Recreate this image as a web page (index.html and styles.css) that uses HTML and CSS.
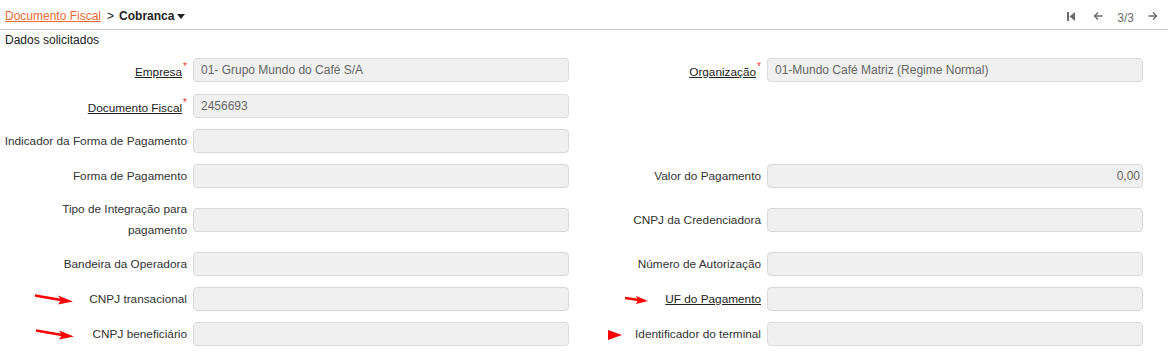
FILE: index.html
```html
<!DOCTYPE html>
<html>
    <head>
        <title>Cobranca</title>
        <link rel="stylesheet" href="styles.css">
    </head>
    <body>
        <div class="topbar">
            <div class="crumbs">
                <a class="crumb-link" href="#">Documento Fiscal</a>
                <span class="sep">&gt;</span>
                <span class="current">Cobranca</span>
                <svg class="caret" width="8" height="5" viewBox="0 0 8 5"><polygon points="0,0 8,0 4,5" fill="#222"/></svg>
            </div>
            <div class="pager">
                <svg class="pg-icon first" width="8" height="9" viewBox="0 0 8 9"><rect x="0" y="0" width="2" height="9" fill="#6b6b6b"/><polygon points="8,0 8,9 2.5,4.5" fill="#6b6b6b"/></svg>
                <svg class="pg-icon" width="10" height="10" viewBox="0 0 10 10"><path d="M9.5 5H1.5M5 1.5L1.5 5L5 8.5" stroke="#6b6b6b" stroke-width="1.4" fill="none"/></svg>
                <span class="pg-count">3/3</span>
                <svg class="pg-icon" width="10" height="10" viewBox="0 0 10 10"><path d="M0.5 5H8.5M5 1.5L8.5 5L5 8.5" stroke="#6b6b6b" stroke-width="1.4" fill="none"/></svg>
            </div>
        </div>

        <div class="section-title">Dados solicitados</div>

        <div class="form">
            <div class="row">
                <div class="field">
                    <label class="lbl"><u>Empresa</u><span class="req">*</span></label>
                    <div class="inp">01- Grupo Mundo do Café S/A</div>
                </div>
                <div class="field">
                    <label class="lbl"><u>Organização</u><span class="req">*</span></label>
                    <div class="inp">01-Mundo Café Matriz (Regime Normal)</div>
                </div>
            </div>

            <div class="row">
                <div class="field">
                    <label class="lbl"><u>Documento Fiscal</u><span class="req">*</span></label>
                    <div class="inp">2456693</div>
                </div>
                <div class="field"></div>
            </div>

            <div class="row">
                <div class="field">
                    <label class="lbl">Indicador da Forma de Pagamento</label>
                    <div class="inp"></div>
                </div>
                <div class="field"></div>
            </div>

            <div class="row">
                <div class="field">
                    <label class="lbl">Forma de Pagamento</label>
                    <div class="inp"></div>
                </div>
                <div class="field">
                    <label class="lbl">Valor do Pagamento</label>
                    <div class="inp num">0,00</div>
                </div>
            </div>

            <div class="row">
                <div class="field">
                    <label class="lbl wrap">Tipo de Integração para pagamento</label>
                    <div class="inp"></div>
                </div>
                <div class="field">
                    <label class="lbl">CNPJ da Credenciadora</label>
                    <div class="inp"></div>
                </div>
            </div>

            <div class="row">
                <div class="field">
                    <label class="lbl">Bandeira da Operadora</label>
                    <div class="inp"></div>
                </div>
                <div class="field">
                    <label class="lbl">Número de Autorização</label>
                    <div class="inp"></div>
                </div>
            </div>

            <div class="row">
                <div class="field">
                    <svg class="mark mark-a" width="40" height="12" viewBox="0 0 40 12"><path d="M0 1.5L26 6" stroke="#f00" stroke-width="2.4"/><polygon points="23,1.5 38,7.5 23,10.5 26,6" fill="#f00"/></svg>
                    <label class="lbl">CNPJ transacional</label>
                    <div class="inp"></div>
                </div>
                <div class="field">
                    <svg class="mark mark-b" width="24" height="8" viewBox="0 0 24 8"><path d="M0 2L14 4" stroke="#f00" stroke-width="2.6"/><polygon points="11,0 23,5 11,8 13,4" fill="#f00"/></svg>
                    <label class="lbl"><u>UF do Pagamento</u></label>
                    <div class="inp"></div>
                </div>
            </div>

            <div class="row">
                <div class="field">
                    <svg class="mark mark-c" width="40" height="12" viewBox="0 0 40 12"><path d="M0 1.5L26 6" stroke="#f00" stroke-width="2.4"/><polygon points="23,1.5 38,7.5 23,10.5 26,6" fill="#f00"/></svg>
                    <label class="lbl">CNPJ beneficiário</label>
                    <div class="inp"></div>
                </div>
                <div class="field">
                    <svg class="mark mark-d" width="14" height="10" viewBox="0 0 14 10"><polygon points="0,0 14,5 0,10" fill="#f00"/></svg>
                    <label class="lbl">Identificador do terminal</label>
                    <div class="inp"></div>
                </div>
            </div>
        </div>
    </body>
</html>
```
FILE: styles.css
```css
body {
    margin: 0;
    background-color: white;
    color: #333;
    font-family: "Liberation Sans", Arial, sans-serif;
    font-size: 12px;
}

.topbar {
    display: flex;
    align-items: center;
    justify-content: space-between;
    height: 29px;
    width: 1168px;
    border-bottom: 1px solid #c8c8c8;
}

.crumbs {
    display: flex;
    align-items: center;
    padding-left: 5px;
    padding-top: 3px;
    font-size: 12px;
}

.crumb-link {
    color: #ee6b35;
    text-decoration: underline;
}

.sep {
    color: #222;
    margin: 0 5px 0 6px;
}

.current {
    color: #222;
    font-weight: bold;
}

.caret {
    margin-left: 3px;
}

.pager {
    display: flex;
    align-items: center;
    padding-right: 10px;
    padding-top: 3px;
    color: #6b6b6b;
}

.pg-icon.first {
    margin-right: 18px;
}

.pg-count {
    margin: 0 14px 0 14px;
    padding-top: 4px;
}

.section-title {
    padding: 3px 0 0 5px;
    height: 18px;
    color: #222;
}

.form {
    padding-top: 6px;
}

.row {
    display: flex;
    align-items: center;
    margin-bottom: 11px;
}

.field {
    position: relative;
    display: flex;
    align-items: center;
    width: 574px;
}

.lbl {
    width: 187px;
    margin-right: 6px;
    text-align: right;
    line-height: 20px;
    color: #333;
    font-size: 11.8px;
}

.lbl u {
    color: #222;
}

.lbl.wrap {
    padding-left: 50px;
    width: 137px;
    line-height: 21px;
}

.req {
    color: #e33;
    font-size: 10px;
    vertical-align: 6px;
    margin-left: 1px;
}

.inp {
    box-sizing: border-box;
    width: 376px;
    height: 24px;
    line-height: 22px;
    padding: 0 7px;
    background-color: #f0f0f0;
    border: 1px solid #dadada;
    border-radius: 4px;
    color: #666;
}

.inp.num {
    text-align: right;
    padding-right: 2px;
}

.mark {
    position: absolute;
}

.mark-a {
    left: 35px;
    top: 7px;
}

.mark-b {
    left: 51px;
    top: 9px;
}

.mark-c {
    left: 36px;
    top: 7px;
}

.mark-d {
    left: 34px;
    top: 8px;
}
```
